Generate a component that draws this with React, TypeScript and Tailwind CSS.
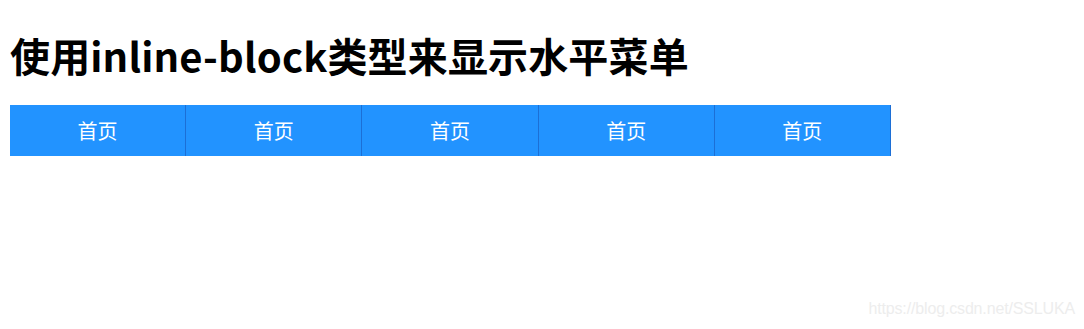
export default function App() {
  const items = ["首页", "首页", "首页", "首页", "首页"];
  return (
    <div
      className="relative min-h-[329px] bg-white px-[10px] pt-[31px]"
      style={{ fontFamily: '"Noto Sans CJK SC", "Noto Sans", sans-serif' }}
    >
      <h1 className="m-0 text-[40px] font-bold leading-[48px] tracking-[0.15px] text-black">
        使用inline-block类型来显示水平菜单
      </h1>
      <ul className="mt-[26px] flex list-none p-0">
        {items.map((t, i) => (
          <li
            key={i}
            className="flex h-[51px] w-[176.2px] items-center justify-center border-r border-[#1c6fd6] bg-[#2293ff] text-[20px] text-white"
          >
            {t}
          </li>
        ))}
      </ul>
      <div className="absolute right-[9px] top-[300px] font-['Liberation_Sans',Arial,sans-serif] text-[16px] leading-[18px] tracking-[-0.15px] text-[#ededed]">
        https://blog.csdn.net/SSLUKA
      </div>
    </div>
  );
}
